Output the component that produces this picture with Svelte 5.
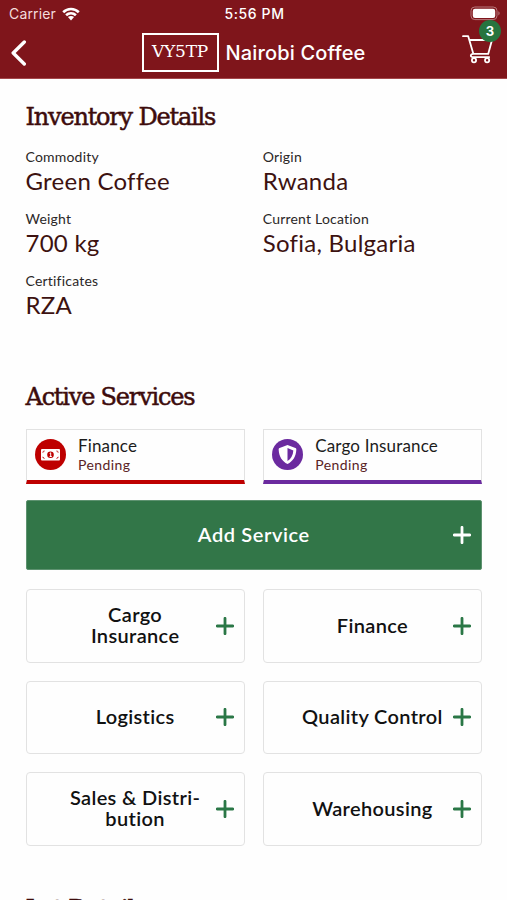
<script>
    const details = [
        { label: 'Commodity', value: 'Green Coffee' },
        { label: 'Origin', value: 'Rwanda' },
        { label: 'Weight', value: '700 kg' },
        { label: 'Current Location', value: 'Sofia, Bulgaria' },
        { label: 'Certificates', value: 'RZA' },
    ];

    const activeServices = [
        { name: 'Finance', status: 'Pending', icon: 'money' },
        { name: 'Cargo Insurance', status: 'Pending', icon: 'shield' },
    ];

    const services = [
        ['Cargo', 'Insurance'],
        ['Finance'],
        ['Logistics'],
        ['Quality Control'],
        ['Sales & Distri-', 'bution'],
        ['Warehousing'],
    ];

    let cartCount = $state(3);
</script>

{#snippet plus()}
    <svg class="plus" viewBox="0 0 18 18" aria-hidden="true">
        <path d="M9 1.3v15.4M1.3 9h15.4" />
    </svg>
{/snippet}

<div class="screen">
    <header>
        <div class="status-bar">
            <div class="carrier">
                <span>Carrier</span>
                <svg class="wifi" viewBox="0 0 18 14" aria-hidden="true">
                    <path d="M1.2 5.2C5.6.9 12.4.9 16.8 5.2" />
                    <path d="M4.1 8.2c2.8-2.7 7-2.7 9.8 0" />
                    <path class="solid" d="M5.9 10.1c1.8-1.6 4.4-1.6 6.2 0L9 13.5z" />
                </svg>
            </div>
            <span class="time">5:56 PM</span>
            <svg class="battery" viewBox="0 0 31 15" aria-hidden="true">
                <rect class="shell" x="1" y="1" width="26" height="12.6" rx="3.8" />
                <rect class="charge" x="2.8" y="2.7" width="22.4" height="9.2" rx="2.2" />
                <path class="cap" d="M28.4 5.2c1.6.6 1.6 3.6 0 4.2z" />
            </svg>
        </div>
        <nav>
            <button class="back" aria-label="Back">
                <svg viewBox="0 0 16 26" aria-hidden="true">
                    <path d="M13.3 2 2.2 13l11.1 11" />
                </svg>
            </button>
            <div class="title">
                <span class="lot-code">VY5TP</span>
                <h1>Nairobi Coffee</h1>
            </div>
            <button class="cart" aria-label="Cart">
                <svg viewBox="0 0 32 29" aria-hidden="true">
                    <path d="M1 1.2h5.2l5.2 17.7h14.8L30 5H7.7M11.4 18.9c-3.4.3-3.3 3.2-.6 3.2h16.4" />
                    <circle cx="12" cy="25.2" r="2.1" />
                    <circle cx="25.1" cy="25.2" r="2.1" />
                </svg>
                <span class="badge">{cartCount}</span>
            </button>
        </nav>
    </header>

    <main>
        <h2>Inventory Details</h2>
        <dl class="details">
            {#each details as item}
                <div class="detail">
                    <dt>{item.label}</dt>
                    <dd>{item.value}</dd>
                </div>
            {/each}
        </dl>

        <h2>Active Services</h2>
        <div class="active-list">
            {#each activeServices as service}
                <div class="active-card {service.icon}">
                    <svg class="service-icon" viewBox="0 0 31 31" aria-hidden="true">
                        <circle class="disc" cx="15.5" cy="15.5" r="15.5" />
                        {#if service.icon === 'money'}
                            <rect class="white" x="6" y="10" width="19" height="11.4" rx="1" />
                            <circle class="disc" cx="15.5" cy="15.7" r="3.3" />
                            <path class="mark" d="M14.7 14.4l1-.6v3.5M14.6 17.5h2.2" />
                            <path class="corner" d="M7.5 13.2c1 0 1.6-.6 1.6-1.6M23.5 13.2c-1 0-1.6-.6-1.6-1.6M7.5 18.2c1 0 1.6.6 1.6 1.6M23.5 18.2c-1 0-1.6.6-1.6 1.6" />
                        {:else}
                            <path class="white" d="M15.5 6.1 23.4 9c.9.4 1 1 .9 2-.3 6.5-3.4 11.3-8.8 14-5.4-2.7-8.5-7.5-8.8-14-.1-1 0-1.6.9-2z" />
                            <path class="disc" d="M15.5 9.1v12.8c3.5-2.1 5.5-5.5 5.8-10.5z" />
                        {/if}
                    </svg>
                    <div class="service-text">
                        <span class="service-name">{service.name}</span>
                        <span class="service-status">{service.status}</span>
                    </div>
                </div>
            {/each}
        </div>

        <button class="add-service">
            <span>Add Service</span>
            {@render plus()}
        </button>

        <div class="service-grid">
            {#each services as lines}
                <button class="service-option">
                    <span class="option-label">
                        {#each lines as line}
                            <span>{line}</span>
                        {/each}
                    </span>
                    {@render plus()}
                </button>
            {/each}
        </div>

        <h2 class="lot-heading">Lot Details</h2>
    </main>
</div>

<style>
    :global(body) {
        background: #fefefe;
        overflow: hidden;
    }

    .screen {
        height: 900px;
        overflow: hidden;
        font-family: Lato, "Open Sans", sans-serif;
        font-variant-ligatures: none;
        color: #1c1c1c;
    }

    button {
        margin: 0;
        padding: 0;
        border: none;
        background: none;
        font: inherit;
        color: inherit;
    }

    svg {
        display: block;
        fill: none;
        flex: none;
    }

    header {
        height: 79px;
        box-sizing: border-box;
        background: #7f151b;
        border-bottom: 1px solid #a4474b;
        color: #fff;
        font-family: Inter, sans-serif;
    }

    .status-bar {
        display: grid;
        grid-template-columns: 1fr auto 1fr;
        align-items: center;
        height: 27px;
        padding: 0 6px 0 9px;
        font-size: 14px;
    }

    .carrier {
        display: flex;
        align-items: center;
        gap: 6px;
        color: #f4dcdc;
        letter-spacing: 0.15px;
    }

    .wifi {
        width: 18px;
        height: 14px;
        stroke: #fff;
        stroke-width: 2.6;
    }

    .wifi .solid {
        fill: #fff;
        stroke: none;
    }

    .time {
        margin-right: 1px;
        font-size: 14px;
        font-weight: 500;
        letter-spacing: 0.6px;
    }

    .battery {
        width: 31px;
        height: 15px;
        justify-self: end;
    }

    .shell {
        stroke: #b9797c;
    }

    .charge {
        fill: #fff;
    }

    .cap {
        fill: #b9797c;
    }

    nav {
        display: grid;
        grid-template-columns: 1fr auto 1fr;
        align-items: center;
        height: 51px;
        padding: 0 13px 0 11px;
    }

    .back svg {
        width: 16px;
        height: 26px;
        stroke: #fff;
        stroke-width: 3.4;
        stroke-linecap: round;
        stroke-linejoin: round;
    }

    .title {
        display: flex;
        align-items: center;
        gap: 7px;
        margin-left: 2px;
    }

    .lot-code {
        box-sizing: border-box;
        width: 77px;
        height: 39px;
        border: 2px solid #fff;
        font-family: "DejaVu Serif", serif;
        font-size: 17px;
        line-height: 33px;
        letter-spacing: -0.2px;
        text-align: center;
    }

    h1 {
        margin: 0;
        font-size: 20px;
        font-weight: 500;
        letter-spacing: 0.15px;
        white-space: nowrap;
    }

    .cart {
        position: relative;
        justify-self: end;
        margin-top: -6px;
    }

    .cart svg {
        width: 32px;
        height: 29px;
        stroke: #fff;
        stroke-width: 1.8;
        stroke-linecap: round;
        stroke-linejoin: round;
    }

    .badge {
        position: absolute;
        top: -15px;
        right: -7px;
        width: 22px;
        height: 22px;
        border-radius: 50%;
        background: #27743f;
        font-size: 13px;
        font-weight: 700;
        line-height: 22px;
        text-align: center;
    }

    main {
        padding: 22px 25px 0 25.5px;
    }

    h2 {
        margin: 0;
        font-family: "DejaVu Serif", serif;
        font-size: 24px;
        font-weight: 400;
        line-height: 32px;
        letter-spacing: -1.2px;
        color: #3d0c0c;
        -webkit-text-stroke: 0.5px #3d0c0c;
        white-space: nowrap;
    }

    .details {
        display: grid;
        grid-template-columns: 1fr 1fr;
        column-gap: 18px;
        height: 234px;
        grid-auto-rows: 62px;
        margin: 14px 0 0;
    }

    dt {
        font-size: 14px;
        line-height: 20px;
        letter-spacing: 0.2px;
        color: #2b2727;
    }

    dd {
        margin: 0;
        font-size: 24px;
        line-height: 28px;
        letter-spacing: 0.25px;
        color: #3d1210;
        white-space: nowrap;
    }

    .active-list {
        display: grid;
        grid-template-columns: 1fr 1fr;
        gap: 18px;
        margin-top: 16px;
    }

    .active-card {
        --accent: #be0000;
        display: flex;
        align-items: center;
        gap: 12px;
        box-sizing: border-box;
        height: 55px;
        padding: 0 0 1px 8.5px;
        border: 1px solid #e2e2e2;
        border-bottom: 4px solid var(--accent);
    }

    .active-card.shield {
        --accent: #6b2a9f;
    }

    .service-icon {
        width: 31px;
        height: 31px;
    }

    .disc {
        fill: var(--accent);
    }

    .white {
        fill: #fff;
    }

    .mark,
    .corner {
        stroke: #fff;
        stroke-width: 1;
    }

    .corner {
        stroke: var(--accent);
    }

    .service-text {
        display: flex;
        flex-direction: column;
    }

    .service-name {
        font-size: 17px;
        line-height: 20px;
        letter-spacing: 0.15px;
    }

    .service-status {
        font-size: 14px;
        line-height: 18px;
        letter-spacing: 0.4px;
        color: #5a2325;
    }

    .add-service,
    .service-option {
        position: relative;
        display: flex;
        align-items: center;
        justify-content: center;
        box-sizing: border-box;
        width: 100%;
        font-size: 20px;
        font-weight: 600;
        line-height: 21px;
        letter-spacing: 0.35px;
    }

    .add-service {
        height: 70.5px;
        margin-top: 15.5px;
        border: 1px solid #5e9270;
        border-radius: 2px;
        background: #327648;
        color: #fff;
        letter-spacing: 0.6px;
    }

    .plus {
        position: absolute;
        right: 10px;
        width: 18px;
        height: 18px;
        stroke: #2a7746;
        stroke-width: 2.8;
        stroke-linecap: round;
    }

    .add-service .plus {
        stroke: #fff;
    }

    .service-grid {
        display: grid;
        grid-template-columns: 1fr 1fr;
        grid-auto-rows: 73.5px;
        gap: 18px;
        margin-top: 19px;
    }

    .service-option {
        border: 1.5px solid #e2e2e2;
        border-radius: 4px;
        color: #111;
    }

    .option-label {
        display: flex;
        flex-direction: column;
        padding-bottom: 1px;
        white-space: nowrap;
    }

    .lot-heading {
        margin-top: 47px;
    }
</style>
